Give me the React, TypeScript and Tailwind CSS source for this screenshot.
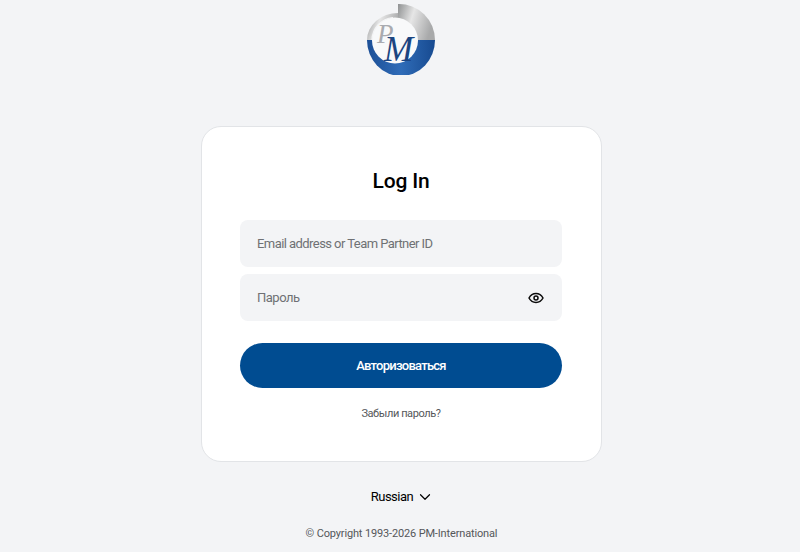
import { ChevronDown } from "lucide-react";

const font = { fontFamily: '"Roboto", "Liberation Sans", sans-serif' };

function Logo() {
  return (
    <svg width="72" height="74" viewBox="0 0 72 74" className="block">
      <defs>
        <linearGradient id="pmGray" x1="0" y1="0" x2="1" y2="0.3">
          <stop offset="0" stopColor="#8f9192" />
          <stop offset="0.45" stopColor="#e6e6e6" />
          <stop offset="1" stopColor="#a8a9aa" />
        </linearGradient>
        <linearGradient id="pmBlue" x1="0" y1="0" x2="1" y2="0">
          <stop offset="0" stopColor="#1c4f96" />
          <stop offset="0.5" stopColor="#2f6cb8" />
          <stop offset="1" stopColor="#174a90" />
        </linearGradient>
      </defs>
      {/* top right quarter */}
      <path d="M33 3 A36 36 0 0 1 70 39 L33 39 Z" fill="url(#pmGray)" />
      {/* top left, thinner arc */}
      <path d="M2 39 A31 27 0 0 1 33 12 L33 39 Z" fill="url(#pmGray)" />
      {/* lower half */}
      <path d="M2 39 A34 36 0 0 0 70 39 Z" fill="url(#pmBlue)" />
      <circle cx="30" cy="39.500" r="23" fill="#f8f9fa" />
      <path d="M7 39 A23 23 0 0 1 28 16.500" fill="none" stroke="#f4f5f6" strokeWidth="1.2" />
      <text x="12" y="42" fontFamily='"Liberation Serif", serif' fontStyle="italic" fontSize="27" fill="#a9abb0">
        P
      </text>
      <text x="19" y="60" fontFamily='"Liberation Serif", serif' fontStyle="italic" fontSize="35" fill="#1c4580">
        M
      </text>
    </svg>
  );
}

function EyeIcon() {
  return (
    <svg width="16" height="16" viewBox="0 0 16 16" fill="none" stroke="#0b0b0b" strokeWidth="1.5">
      <path d="M1 8c1.600-3 4-4.500 7-4.500S13.400 5 15 8c-1.600 3-4 4.500-7 4.500S2.600 11 1 8Z" />
      <circle cx="8" cy="8" r="2" />
    </svg>
  );
}

export default function App() {
  return (
    <div className="flex h-[552px] flex-col items-center overflow-hidden bg-[#f3f4f6] pl-[3px]" style={font}>
      <div className="mt-[1px] mr-[2px] h-[125px]">
        <Logo />
      </div>

      <div className="box-border flex h-[336px] w-[401px] flex-col items-center rounded-[20px] border border-[#e2e4e7] bg-white pt-[38px] pl-[38px] pr-[39px]">
        <h1 className="h-[32px] text-[21px] leading-[32px] font-medium tracking-[-0.2px] text-black">Log In</h1>

        <div className="mt-[23px] flex h-[47px] w-[322px] items-center rounded-[8px] bg-[#f3f4f6] px-[17px]">
          <span className="text-[13px] tracking-[-0.56px] text-[#6f7174]">Email address or Team Partner ID</span>
        </div>
        <div className="mt-[7px] flex h-[47px] w-[322px] items-center justify-between rounded-[8px] bg-[#f3f4f6] pr-[18px] pl-[17px]">
          <span className="text-[13px] tracking-[-0.5px] text-[#6f7174]">Пароль</span>
          <EyeIcon />
        </div>

        <button className="mt-[22px] h-[45px] w-[322px] rounded-full bg-[#004c91] pt-[1px] text-[13px] font-medium tracking-[-0.75px] text-white">
          Авторизоваться
        </button>

        <a className="mt-[18px] text-[11px] leading-[16px] tracking-[-0.4px] text-[#55575a]">Забыли пароль?</a>
      </div>

      <div className="mt-[25px] flex h-[20px] items-center gap-[3px] pl-[2px] text-[13px] tracking-[-0.5px] text-black">
        <span>Russian</span>
        <ChevronDown size={18} strokeWidth={1.6} />
      </div>

      <p className="mt-[19px] text-[11px] leading-[16px] tracking-[-0.15px] text-[#55575a]">
        © Copyright 1993-2026 PM-International
      </p>
    </div>
  );
}
